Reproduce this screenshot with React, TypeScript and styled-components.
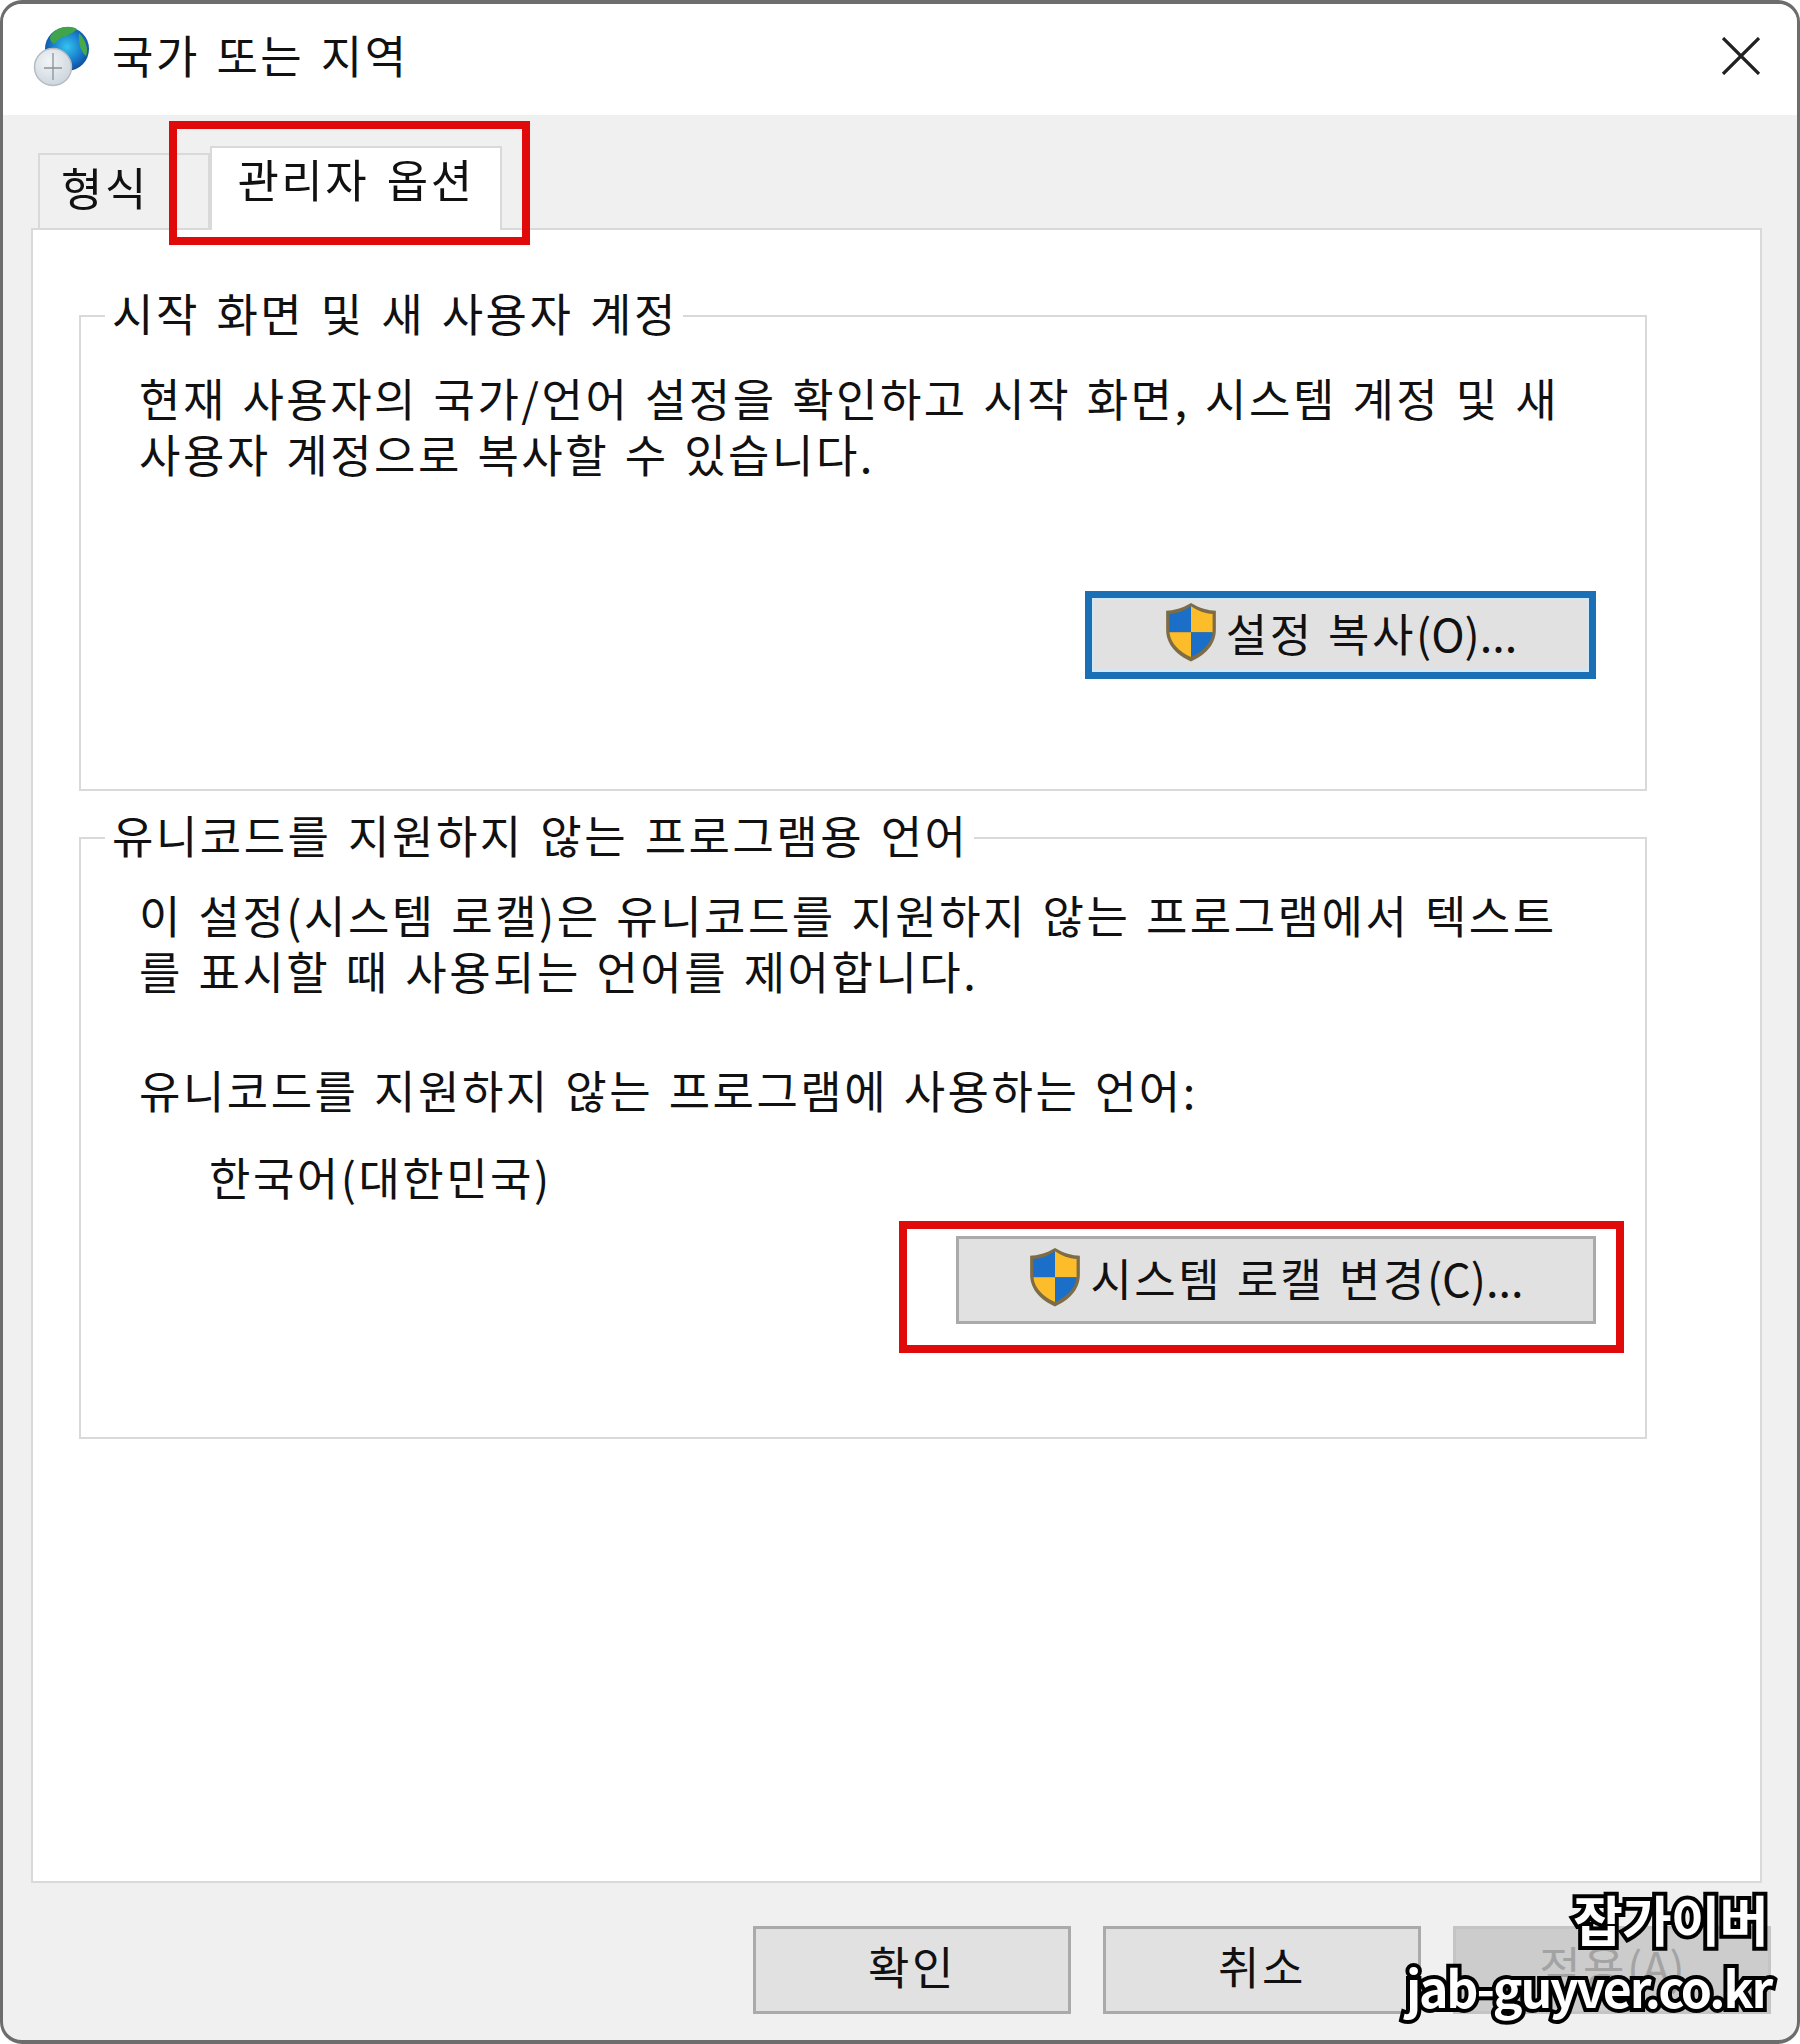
import React from "react";
import styled, { createGlobalStyle } from "styled-components";

const FONT = `"Noto Sans CJK KR", "Noto Sans", sans-serif`;

const GlobalStyle = createGlobalStyle`
  html, body {
    margin: 0;
    padding: 0;
    background: #fff;
  }
`;

const Frame = styled.div`
  position: relative;
  box-sizing: border-box;
  width: 1800px;
  height: 2044px;
  border: solid #6d6d6d;
  border-width: 4px 3px 4px 3px;
  border-radius: 22px;
  overflow: hidden;
  background: #f0f0f0;
  font-family: ${FONT};
  font-size: 45px;
  letter-spacing: 2.5px;
  color: #111;
  filter: blur(0.7px);
`;

const TitleBar = styled.div`
  box-sizing: border-box;
  height: 111px;
  background: #fff;
  display: flex;
  align-items: center;
  padding: 0 36px 8px 27px;
`;

const TitleText = styled.div`
  line-height: 1;
  margin-left: 22px;
  margin-bottom: 3px;
  word-spacing: 4px;
  flex: 1;
`;

const TabStrip = styled.div`
  height: 113px;
  display: flex;
  align-items: flex-end;
  padding-left: 35px;
  position: relative;
  z-index: 1;
`;

const Tab = styled.div<{ $active?: boolean }>`
  box-sizing: border-box;
  display: flex;
  align-items: center;
  justify-content: ${(p) => (p.$active ? "center" : "flex-start")};
  word-spacing: 5px;
  border: 2px solid #d9d9d9;
  border-bottom: none;
  width: ${(p) => (p.$active ? "292px" : "172px")};
  height: ${(p) => (p.$active ? "84px" : "75px")};
  background: ${(p) => (p.$active ? "#fff" : "#f0f0f0")};
  padding: ${(p) => (p.$active ? "0 0 22px" : "0 0 10px 21px")};
  margin-bottom: ${(p) => (p.$active ? "-2px" : "0")};
`;

const Panel = styled.div`
  box-sizing: border-box;
  width: 1731px;
  height: 1655px;
  margin-left: 28px;
  background: #fff;
  border: 2px solid #d9d9d9;
  padding: 59px 113px 0 46px;
  display: flex;
  flex-direction: column;
  gap: 20px;
`;

const Group = styled.fieldset<{ $height: number }>`
  box-sizing: border-box;
  margin: 0;
  padding: 0;
  height: ${(p) => p.$height}px;
  border: 2px solid #d9d9d9;
  min-width: 0;
`;

const GroupTitle = styled.legend`
  line-height: 48px;
  padding: 0 5px 6px 7px;
  margin-left: 24px;
  word-spacing: 4px;
  white-space: nowrap;
`;

const GroupBody = styled.div`
  padding: 0 49px 0 58px;
`;

const Copy = styled.p<{ $indent?: number; $top?: number }>`
  margin: ${(p) => p.$top ?? 0}px 0 0 ${(p) => p.$indent ?? 0}px;
  line-height: 56px;
  word-spacing: 3px;
  white-space: nowrap;
`;

const ButtonRow = styled.div<{ $top: number }>`
  display: flex;
  justify-content: flex-end;
  margin-top: ${(p) => p.$top}px;
`;

const Button = styled.div<{ $focused?: boolean; $disabled?: boolean; $width?: number }>`
  box-sizing: border-box;
  width: ${(p) => p.$width ?? 318}px;
  height: 88px;
  display: flex;
  align-items: center;
  justify-content: center;
  gap: 8px;
  padding-bottom: 6px;
  word-spacing: 2px;
  background: ${(p) => (p.$disabled ? "#cccccc" : "#e1e1e1")};
  color: ${(p) => (p.$disabled ? "#a3a3a3" : "#111")};
  border: ${(p) => (p.$focused ? "7px solid #1a6fb5" : "3px solid #aaaaaa")};
  ${(p) => (p.$focused ? "box-shadow: inset 0 0 0 2px #cfe8fa;" : "")}
  ${(p) => (p.$disabled ? "border-color: #c4c4c4;" : "")}
`;

const Label = styled.span`
  white-space: nowrap;
`;

const Mnemonic = styled.span`
  letter-spacing: 0;
`;

const Footer = styled.div`
  display: flex;
  justify-content: flex-end;
  gap: 32px;
  padding: 43px 26px 0 0;

  ${Button} {
    padding-bottom: 10px;
  }
`;

const Highlight = styled.div<{ $x: number; $y: number; $w: number; $h: number }>`
  position: absolute;
  box-sizing: border-box;
  left: ${(p) => p.$x - 3}px;
  top: ${(p) => p.$y - 4}px;
  width: ${(p) => p.$w}px;
  height: ${(p) => p.$h}px;
  border: 8px solid #e10a0a;
  z-index: 3;
`;

const Watermark = styled.div`
  position: absolute;
  right: 26px;
  bottom: 29px;
  z-index: 4;
  display: flex;
  flex-direction: column;
  align-items: flex-end;
  font-weight: 700;
  color: #fff;
  -webkit-text-stroke: 8px #000;
  paint-order: stroke fill;
  line-height: 1;
`;

const MarkName = styled.div`
  font-size: 54px;
  letter-spacing: -1px;
  margin: 0 3px 15px 0;
`;

const MarkUrl = styled.div`
  font-size: 50px;
  letter-spacing: -2.2px;
`;

const Shield = ({ w }: { w: number }) => (
  <svg width={w} height={w * 1.12} viewBox="0 0 50 56">
    <path d="M25 1 C33 6 41 8 48 8 L48 26 C48 40 37 50 25 55 C13 50 2 40 2 26 L2 8 C9 8 17 6 25 1Z" fill="#7d6c45" />
    <path d="M25 4 L25 28 L5 28 L5 11 C12 11 19 8 25 4Z" fill="#1b6fc9" />
    <path d="M25 4 C31 8 38 11 45 11 L45 28 L25 28Z" fill="#fdbc2a" />
    <path d="M5 28 L25 28 L25 51 C14 46 6 38 5 28Z" fill="#fdbc2a" />
    <path d="M25 28 L45 28 C44 38 36 46 25 51Z" fill="#1b6fc9" />
  </svg>
);

const GlobeClock = () => (
  <svg width="60" height="62" viewBox="0 0 60 62">
    <defs>
      <radialGradient id="globe" cx="0.5" cy="0.45" r="0.6">
        <stop offset="0" stopColor="#35c3ef" />
        <stop offset="0.6" stopColor="#1677c8" />
        <stop offset="1" stopColor="#0f3f8e" />
      </radialGradient>
      <radialGradient id="face" cx="0.4" cy="0.35" r="0.8">
        <stop offset="0" stopColor="#f2f5f7" />
        <stop offset="1" stopColor="#c6d0d8" />
      </radialGradient>
    </defs>
    <circle cx="37" cy="24" r="22" fill="url(#globe)" />
    <path d="M20 12 C26 1 40 0 47 4 C43 9 39 8 36 12 C31 10 29 16 24 19 C21 17 20 15 20 12Z" fill="#3fa44a" />
    <path d="M49 8 C55 14 59 24 56 31 C52 28 48 20 49 8Z" fill="#49a948" />
    <circle cx="23" cy="42" r="18.5" fill="url(#face)" stroke="#b4bcc2" strokeWidth="1.5" />
    <path d="M23 28 V55 M14 43 H32" fill="none" stroke="#8a9298" strokeWidth="1.3" />
  </svg>
);

const CloseIcon = () => (
  <svg width="40" height="38" viewBox="0 0 40 38">
    <path d="M2 1 L38 37 M38 1 L2 37" stroke="#222" strokeWidth="3.2" fill="none" />
  </svg>
);

export default function App() {
  return (
    <>
      <GlobalStyle />
      <Frame>
        <TitleBar>
          <GlobeClock />
          <TitleText>국가 또는 지역</TitleText>
          <CloseIcon />
        </TitleBar>
        <TabStrip>
          <Tab>형식</Tab>
          <Tab $active>관리자 옵션</Tab>
        </TabStrip>
        <Panel>
          <Group $height={502}>
            <GroupTitle>시작 화면 및 새 사용자 계정</GroupTitle>
            <GroupBody>
              <Copy $top={27}>
                현재 사용자의 국가/언어 설정을 확인하고 시작 화면, 시스템 계정 및 새
                <br />
                사용자 계정으로 복사할 수 있습니다.
              </Copy>
              <ButtonRow $top={109}>
                <Button $focused $width={511}>
                  <Shield w={54} />
                  <Label>
                    설정 복사<Mnemonic>(O)...</Mnemonic>
                  </Label>
                </Button>
              </ButtonRow>
            </GroupBody>
          </Group>
          <Group $height={628}>
            <GroupTitle>유니코드를 지원하지 않는 프로그램용 언어</GroupTitle>
            <GroupBody>
              <Copy $top={22}>
                이 설정(시스템 로캘)은 유니코드를 지원하지 않는 프로그램에서 텍스트
                <br />를 표시할 때 사용되는 언어를 제어합니다.
              </Copy>
              <Copy $top={63}>유니코드를 지원하지 않는 프로그램에 사용하는 언어:</Copy>
              <Copy $top={31} $indent={70}>
                한국어(대한민국)
              </Copy>
              <ButtonRow $top={31}>
                <Button $width={640}>
                  <Shield w={54} />
                  <Label>
                    시스템 로캘 변경<Mnemonic>(C)...</Mnemonic>
                  </Label>
                </Button>
              </ButtonRow>
            </GroupBody>
          </Group>
        </Panel>
        <Footer>
          <Button>확인</Button>
          <Button>취소</Button>
          <Button $disabled>
            <Label>
              적용<Mnemonic>(A)</Mnemonic>
            </Label>
          </Button>
        </Footer>
        <Highlight $x={169} $y={121} $w={361} $h={124} />
        <Highlight $x={899} $y={1221} $w={725} $h={132} />
        <Watermark>
          <MarkName>잡가이버</MarkName>
          <MarkUrl>jab-guyver.co.kr</MarkUrl>
        </Watermark>
      </Frame>
    </>
  );
}
